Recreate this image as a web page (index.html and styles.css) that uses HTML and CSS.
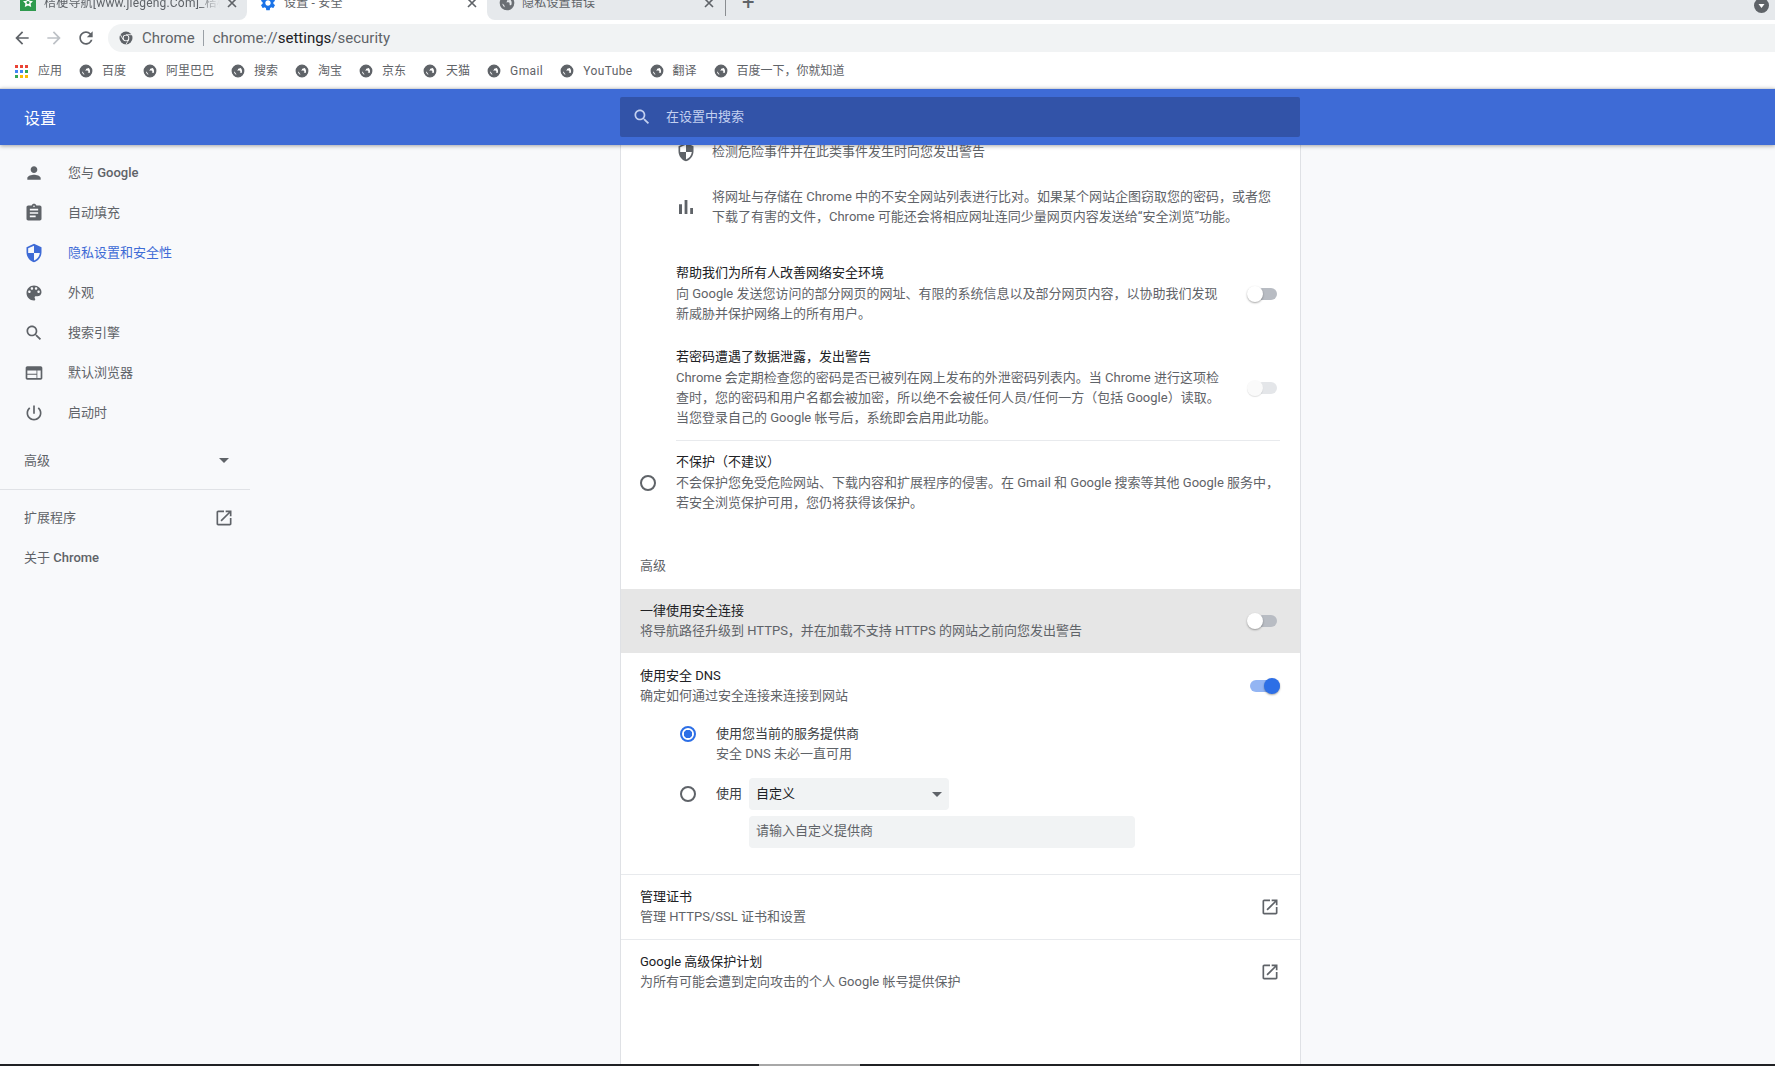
FILE: index.html
```html
<!DOCTYPE html>
<html lang="zh-CN">
<head>
    <meta charset="UTF-8">
    <title>设置 - 安全</title>
    <link rel="stylesheet" href="styles.css">
</head>
<body>
    <svg class="icon-defs">
        <symbol id="i-person" viewBox="0 0 24 24"><path d="M12 12c2.21 0 4-1.79 4-4s-1.79-4-4-4-4 1.79-4 4 1.79 4 4 4zm0 2c-2.67 0-8 1.34-8 4v2h16v-2c0-2.66-5.33-4-8-4z"/></symbol>
        <symbol id="i-assignment" viewBox="0 0 24 24"><path d="M19 3h-4.18C14.4 1.84 13.3 1 12 1c-1.3 0-2.4.84-2.82 2H5c-1.1 0-2 .9-2 2v14c0 1.1.9 2 2 2h14c1.1 0 2-.9 2-2V5c0-1.1-.9-2-2-2zm-7 0c.55 0 1 .45 1 1s-.45 1-1 1-1-.45-1-1 .45-1 1-1zm2 14H7v-2h7v2zm3-4H7v-2h10v2zm0-4H7V7h10v2z"/></symbol>
        <symbol id="i-security" viewBox="0 0 24 24"><path d="M12 1L3 5v6c0 5.55 3.84 10.74 9 12 5.16-1.26 9-6.45 9-12V5l-9-4zm0 10.99h7c-.53 4.12-3.28 7.79-7 8.94V12H5V6.3l7-3.11v8.8z"/></symbol>
        <symbol id="i-palette" viewBox="0 0 24 24"><path d="M12 3c-4.97 0-9 4.03-9 9s4.03 9 9 9c.83 0 1.5-.67 1.5-1.5 0-.39-.15-.74-.39-1.01-.23-.26-.38-.61-.38-.99 0-.83.67-1.5 1.5-1.5H16c2.76 0 5-2.24 5-5 0-4.42-4.03-8-9-8zm-5.5 9c-.83 0-1.5-.67-1.5-1.5S5.67 9 6.5 9 8 9.67 8 10.5 7.33 12 6.5 12zm3-4C8.67 8 8 7.33 8 6.5S8.67 5 9.5 5s1.5.67 1.5 1.5S10.33 8 9.5 8zm5 0c-.83 0-1.5-.67-1.5-1.5S13.67 5 14.5 5s1.5.67 1.5 1.5S15.33 8 14.5 8zm3 4c-.83 0-1.5-.67-1.5-1.5S16.67 9 17.5 9s1.5.67 1.5 1.5-.67 1.5-1.5 1.5z"/></symbol>
        <symbol id="i-search" viewBox="0 0 24 24"><path d="M15.5 14h-.79l-.28-.27C15.41 12.59 16 11.11 16 9.5 16 5.91 13.09 3 9.5 3S3 5.91 3 9.5 5.91 16 9.5 16c1.61 0 3.09-.59 4.23-1.57l.27.28v.79l5 4.99L20.49 19l-4.99-5zm-6 0C7.01 14 5 11.99 5 9.5S7.01 5 9.5 5 14 7.01 14 9.5 11.99 14 9.5 14z"/></symbol>
        <symbol id="i-web" viewBox="0 0 24 24"><path d="M20 4H4c-1.1 0-1.99.9-1.99 2L2 18c0 1.1.9 2 2 2h16c1.1 0 2-.9 2-2V6c0-1.1-.9-2-2-2zm-5 14H4v-4h11v4zm0-5H4V9h11v4zm5 5h-4V9h4v9z"/></symbol>
        <symbol id="i-power" viewBox="0 0 24 24"><path d="M13 3h-2v10h2V3zm4.83 2.17l-1.42 1.42C17.99 7.86 19 9.81 19 12c0 3.87-3.13 7-7 7s-7-3.13-7-7c0-2.19 1.01-4.14 2.58-5.42L6.17 5.17C4.23 6.82 3 9.26 3 12c0 4.97 4.03 9 9 9s9-4.03 9-9c0-2.74-1.23-5.18-3.17-6.83z"/></symbol>
        <symbol id="i-open" viewBox="0 0 24 24"><path d="M19 19H5V5h7V3H5c-1.11 0-2 .9-2 2v14c0 1.1.89 2 2 2h14c1.1 0 2-.9 2-2v-7h-2v7zM14 3v2h3.59l-9.83 9.83 1.41 1.41L19 6.41V10h2V3h-7z"/></symbol>
        <symbol id="i-bars" viewBox="0 0 24 24"><path d="M5 9.2h3V19H5zM10.6 5h2.8v14h-2.8zm5.6 8H19v6h-2.8z"/></symbol>
        <symbol id="i-globe" viewBox="0 0 24 24"><path stroke="currentColor" stroke-width="2" d="M12 2C6.48 2 2 6.48 2 12s4.48 10 10 10 10-4.48 10-10S17.52 2 12 2zm-1 17.93c-3.95-.49-7-3.85-7-7.93 0-.62.08-1.21.21-1.79L9 15v1c0 1.1.9 2 2 2v1.93zm6.9-2.54c-.26-.81-1-1.39-1.9-1.39h-1v-3c0-.55-.45-1-1-1H8v-2h2c.55 0 1-.45 1-1V7h2c1.1 0 2-.9 2-2v-.41c2.93 1.19 5 4.06 5 7.41 0 2.08-.8 3.97-2.1 5.39z"/></symbol>
        <symbol id="i-close" viewBox="0 0 12 12"><path d="M2 2l8 8M10 2l-8 8" fill="none" stroke="currentColor" stroke-width="1.6"/></symbol>
    </svg>

    <div class="tabstrip">
        <div class="tab tab-first">
            <svg class="favicon" viewBox="0 0 16 16"><rect width="16" height="16" fill="#2f9a4e"/><path d="M8 2.5l1.6 3.2 3.4.5-2.4 2.4.6 3.4L8 10.4l-3.2 1.6.6-3.4L3 6.2l3.4-.5z" fill="#fff"/><circle cx="8" cy="7.5" r="1.5" fill="#2f9a4e"/></svg>
            <span class="tab-title">桔梗导航[www.jiegeng.Com]_桔梗</span>
            <svg class="tab-close"><use href="#i-close"/></svg>
        </div>
        <div class="tab tab-active">
            <svg class="favicon gear" viewBox="0 0 24 24"><path d="M19.14 12.94c.04-.3.06-.61.06-.94 0-.32-.02-.64-.07-.94l2.03-1.58c.18-.14.23-.41.12-.61l-1.92-3.32c-.12-.22-.37-.29-.59-.22l-2.39.96c-.5-.38-1.03-.7-1.62-.94l-.36-2.54c-.04-.24-.24-.41-.48-.41h-3.84c-.24 0-.43.17-.47.41l-.36 2.54c-.59.24-1.13.57-1.62.94l-2.39-.96c-.22-.08-.47 0-.59.22L2.74 8.87c-.12.21-.08.47.12.61l2.03 1.58c-.05.3-.09.63-.09.94s.02.64.07.94l-2.03 1.58c-.18.14-.23.41-.12.61l1.92 3.32c.12.22.37.29.59.22l2.39-.96c.5.38 1.03.7 1.62.94l.36 2.54c.05.24.24.41.48.41h3.84c.24 0 .44-.17.47-.41l.36-2.54c.59-.24 1.13-.56 1.62-.94l2.39.96c.22.08.47 0 .59-.22l1.92-3.32c.12-.22.07-.47-.12-.61l-2.01-1.58zM12 15.6c-1.98 0-3.6-1.62-3.6-3.6s1.62-3.6 3.6-3.6 3.6 1.62 3.6 3.6-1.62 3.6-3.6 3.6z"/></svg>
            <span class="tab-title">设置 - 安全</span>
            <svg class="tab-close"><use href="#i-close"/></svg>
        </div>
        <div class="tab tab-last">
            <svg class="favicon globe"><use href="#i-globe"/></svg>
            <span class="tab-title">隐私设置错误</span>
            <svg class="tab-close"><use href="#i-close"/></svg>
            <span class="tab-sep"></span>
            <span class="tab-plus">+</span>
            <svg class="tab-avatar" viewBox="0 0 15 15"><circle cx="7.5" cy="7.5" r="7.5" fill="#5f6368"/><path d="M4.5 6h6l-3 4z" fill="#fff"/></svg>
        </div>
    </div>

    <div class="toolbar">
        <svg class="nav-icon" viewBox="0 0 24 24"><path d="M20 11H7.83l5.59-5.59L12 4l-8 8 8 8 1.41-1.41L7.83 13H20v-2z"/></svg>
        <svg class="nav-icon nav-off" viewBox="0 0 24 24"><path d="M12 4l-1.41 1.41L16.17 11H4v2h12.17l-5.58 5.59L12 20l8-8z"/></svg>
        <svg class="nav-icon" viewBox="0 0 24 24"><path d="M17.65 6.35C16.2 4.9 14.21 4 12 4c-4.42 0-7.99 3.58-7.99 8s3.57 8 7.99 8c3.73 0 6.84-2.55 7.73-6h-2.08c-.82 2.33-3.04 4-5.65 4-3.31 0-6-2.69-6-6s2.69-6 6-6c1.66 0 3.14.69 4.22 1.78L13 11h7V4l-2.35 2.35z"/></svg>
        <div class="omnibox">
            <svg class="chrome-icon" viewBox="0 0 14 14"><circle cx="7" cy="7" r="6.5" fill="#5f6368"/><circle cx="7" cy="7" r="3.3" fill="#fff"/><circle cx="7" cy="7" r="2.4" fill="#5f6368"/><path d="M7 3.7h6M4.2 8.7L1.3 3.6M9.8 8.7L6.9 13.5" stroke="#fff" stroke-width=".8"/></svg>
            <span class="omni-chip">Chrome</span>
            <span class="omni-sep"></span>
            <span class="omni-url">chrome://<b>settings</b>/security</span>
        </div>
    </div>

    <div class="bookmarks">
        <div class="bm">
            <svg class="apps-icon" viewBox="0 0 13 13">
                <rect width="3" height="3" x="0" y="0" fill="#ea4335"/><rect width="3" height="3" x="5" y="0" fill="#ea4335"/><rect width="3" height="3" x="10" y="0" fill="#ea4335"/>
                <rect width="3" height="3" x="0" y="5" fill="#4285f4"/><rect width="3" height="3" x="5" y="5" fill="#4285f4"/><rect width="3" height="3" x="10" y="5" fill="#34a853"/>
                <rect width="3" height="3" x="0" y="10" fill="#34a853"/><rect width="3" height="3" x="5" y="10" fill="#fbbc05"/><rect width="3" height="3" x="10" y="10" fill="#fbbc05"/>
            </svg>
            应用
        </div>
        <div class="bm"><svg class="bm-globe"><use href="#i-globe"/></svg>百度</div>
        <div class="bm"><svg class="bm-globe"><use href="#i-globe"/></svg>阿里巴巴</div>
        <div class="bm"><svg class="bm-globe"><use href="#i-globe"/></svg>搜索</div>
        <div class="bm"><svg class="bm-globe"><use href="#i-globe"/></svg>淘宝</div>
        <div class="bm"><svg class="bm-globe"><use href="#i-globe"/></svg>京东</div>
        <div class="bm"><svg class="bm-globe"><use href="#i-globe"/></svg>天猫</div>
        <div class="bm bm-latin"><svg class="bm-globe"><use href="#i-globe"/></svg>Gmail</div>
        <div class="bm bm-latin"><svg class="bm-globe"><use href="#i-globe"/></svg>YouTube</div>
        <div class="bm"><svg class="bm-globe"><use href="#i-globe"/></svg>翻译</div>
        <div class="bm"><svg class="bm-globe"><use href="#i-globe"/></svg>百度一下，你就知道</div>
    </div>

    <header class="settings-header">
        <div class="header-title">设置</div>
        <div class="searchbox">
            <svg class="search-icon"><use href="#i-search"/></svg>
            <span>在设置中搜索</span>
        </div>
    </header>

    <div class="page">
        <nav class="sidebar">
            <a class="nav-item"><svg class="nav-svg"><use href="#i-person"/></svg><span>您与 <b>Google</b></span></a>
            <a class="nav-item"><svg class="nav-svg"><use href="#i-assignment"/></svg>自动填充</a>
            <a class="nav-item active"><svg class="nav-svg"><use href="#i-security"/></svg>隐私设置和安全性</a>
            <a class="nav-item"><svg class="nav-svg"><use href="#i-palette"/></svg>外观</a>
            <a class="nav-item"><svg class="nav-svg"><use href="#i-search"/></svg>搜索引擎</a>
            <a class="nav-item"><svg class="nav-svg"><use href="#i-web"/></svg>默认浏览器</a>
            <a class="nav-item"><svg class="nav-svg"><use href="#i-power"/></svg>启动时</a>
            <div class="nav-plain nav-advanced">高级<span class="caret"></span></div>
            <div class="nav-divider"></div>
            <div class="nav-plain nav-ext">扩展程序<svg class="open-icon"><use href="#i-open"/></svg></div>
            <div class="nav-plain"><span>关于 <b>Chrome</b></span></div>
        </nav>

        <main class="card">
            <div class="bullet bullet-first">
                <svg class="bullet-icon"><use href="#i-security"/></svg>
                <div class="sub">检测危险事件并在此类事件发生时向您发出警告</div>
            </div>
            <div class="bullet bullet-second">
                <svg class="bullet-icon bars-icon"><use href="#i-bars"/></svg>
                <div class="sub">将网址与存储在 Chrome 中的不安全网站列表进行比对。如果某个网站企图窃取您的密码，或者您<br>下载了有害的文件，Chrome 可能还会将相应网址连同少量网页内容发送给“安全浏览”功能。</div>
            </div>

            <div class="nested help-row">
                <div>
                    <div class="title">帮助我们为所有人改善网络安全环境</div>
                    <div class="sub">向 Google 发送您访问的部分网页的网址、有限的系统信息以及部分网页内容，以协助我们发现<br>新威胁并保护网络上的所有用户。</div>
                </div>
                <div class="toggle"><span class="knob"></span></div>
            </div>
            <div class="nested leak-row">
                <div>
                    <div class="title">若密码遭遇了数据泄露，发出警告</div>
                    <div class="sub">Chrome 会定期检查您的密码是否已被列在网上发布的外泄密码列表内。当 Chrome 进行这项检<br>查时，您的密码和用户名都会被加密，所以绝不会被任何人员/任何一方（包括 Google）读取。<br>当您登录自己的 Google 帐号后，系统即会启用此功能。</div>
                </div>
                <div class="toggle toggle-disabled"><span class="knob"></span></div>
            </div>
            <div class="nested-divider"></div>

            <div class="noprotect">
                <span class="radio"></span>
                <div>
                    <div class="title">不保护（不建议）</div>
                    <div class="sub">不会保护您免受危险网站、下载内容和扩展程序的侵害。在 Gmail 和 Google 搜索等其他 Google 服务中，<br>若安全浏览保护可用，您仍将获得该保护。</div>
                </div>
            </div>

            <div class="section-label">高级</div>

            <div class="row row-hover">
                <div>
                    <div class="title">一律使用安全连接</div>
                    <div class="sub">将导航路径升级到 HTTPS，并在加载不支持 HTTPS 的网站之前向您发出警告</div>
                </div>
                <div class="toggle"><span class="knob"></span></div>
            </div>

            <div class="row dns-row">
                <div>
                    <div class="title">使用安全 DNS</div>
                    <div class="sub">确定如何通过安全连接来连接到网站</div>
                </div>
                <div class="toggle toggle-on"><span class="knob"></span></div>
            </div>

            <div class="dns-option">
                <span class="radio radio-on"></span>
                <div>
                    <div class="title title-soft">使用您当前的服务提供商</div>
                    <div class="sub">安全 DNS 未必一直可用</div>
                </div>
            </div>
            <div class="dns-option dns-custom">
                <span class="radio"></span>
                <span class="title-soft">使用</span>
                <div class="select">自定义<span class="caret"></span></div>
            </div>
            <div class="custom-input">请输入自定义提供商</div>

            <div class="row link-row">
                <div>
                    <div class="title">管理证书</div>
                    <div class="sub">管理 HTTPS/SSL 证书和设置</div>
                </div>
                <svg class="open-icon"><use href="#i-open"/></svg>
            </div>
            <div class="row link-row">
                <div>
                    <div class="title">Google 高级保护计划</div>
                    <div class="sub">为所有可能会遭到定向攻击的个人 Google 帐号提供保护</div>
                </div>
                <svg class="open-icon"><use href="#i-open"/></svg>
            </div>
        </main>
    </div>

    <div class="taskbar"><span class="taskbar-thumb"></span></div>
</body>
</html>
```

FILE: styles.css
```css
* {
    box-sizing: border-box;
}

body {
    margin: 0;
    height: 1066px;
    overflow: hidden;
    display: flex;
    flex-direction: column;
    background: #fff;
    font-family: Roboto, "Noto Sans CJK SC", sans-serif;
    font-size: 13px;
    line-height: 20px;
    color: #5f6368;
}

.icon-defs {
    width: 0;
    height: 0;
    position: absolute;
}

svg {
    fill: currentColor;
    flex: none;
}

/* Tab strip */
.tabstrip {
    display: flex;
    height: 20px;
    flex: none;
    overflow: hidden;
    background: #fff;
    font-size: 12px;
}

.tab {
    display: flex;
    align-items: center;
    height: 20px;
    color: #5f6368;
}

.tab > * {
    margin-top: -14px;
}

.tab-first {
    width: 247px;
    padding-left: 20px;
    background: #e6e9ec;
    border-bottom-right-radius: 8px;
}

.tab-first .tab-title {
    -webkit-mask-image: linear-gradient(to right, #000 88%, transparent);
    mask-image: linear-gradient(to right, #000 88%, transparent);
}

.tab-active {
    width: 240px;
    padding-left: 14px;
    background: #fff;
}

.tab-last {
    flex: 1;
    padding-left: 12px;
    background: #e6e9ec;
    border-bottom-left-radius: 8px;
}

.favicon {
    width: 16px;
    height: 16px;
}

.gear {
    width: 18px;
    height: 18px;
    color: #1a73e8;
    margin-left: -2px;
}

.globe {
    color: #6b6f74;
}

.tab-title {
    width: 176px;
    margin-left: 8px;
    white-space: nowrap;
    overflow: hidden;
    line-height: 16px;
    letter-spacing: .2px;
}

.tab-close {
    width: 12px;
    height: 12px;
    margin-left: 6px;
}

.tab-active .tab-title {
    width: 176px;
    margin-left: 7px;
}

.tab-last .tab-title {
    width: 175px;
    margin-left: 7px;
}

.tab-sep {
    width: 1px;
    height: 26px;
    margin-left: 10px;
    background: #8a8d91;
}

.tab-plus {
    margin-left: 16px;
    font-size: 22px;
    line-height: 16px;
    color: #5f6368;
}

.tab-avatar {
    width: 15px;
    height: 15px;
    margin-left: auto;
    margin-right: 6px;
    margin-top: -10px;
}

/* Toolbar */
.toolbar {
    display: flex;
    align-items: center;
    height: 36px;
    flex: none;
    padding: 4px 0 4px 12px;
}

.nav-icon {
    width: 20px;
    height: 20px;
    margin-right: 12px;
    color: #5f6368;
}

.nav-off {
    color: #bdc1c6;
}

.omnibox {
    flex: 1;
    height: 28px;
    display: flex;
    align-items: center;
    padding-left: 11px;
    border-radius: 14px 0 0 14px;
    background: #f1f3f4;
    font-size: 15px;
    color: #5f6368;
}

.omni-url b {
    font-weight: 400;
    color: #202124;
}

.chrome-icon {
    width: 14px;
    height: 14px;
    margin-right: 9px;
}

.omni-sep {
    width: 1px;
    height: 16px;
    margin: 0 9px 0 8px;
    background: #9aa0a6;
}

/* Bookmarks bar */
.bookmarks {
    display: flex;
    align-items: center;
    gap: 17px;
    height: 32px;
    flex: none;
    padding: 0 0 2px 15px;
    font-size: 12px;
    color: #5f6368;
}

.bm {
    display: flex;
    align-items: center;
    white-space: nowrap;
}

.bm-latin {
    letter-spacing: .4px;
}

.apps-icon {
    width: 13px;
    height: 13px;
    margin-right: 10px;
}

.bm-globe {
    width: 14px;
    height: 14px;
    margin-right: 9px;
    color: #5f6368;
}

/* Settings header */
.settings-header {
    display: flex;
    align-items: center;
    height: 57px;
    flex: none;
    border-top: 1px solid #d6d8da;
    background: #3e6bd6;
    box-shadow: 0 1px 4px rgba(0, 0, 0, 0.35);
    position: relative;
    z-index: 2;
}

.header-title {
    width: 620px;
    padding: 3px 0 0 24px;
    font-size: 16px;
    color: #fff;
}

.searchbox {
    display: flex;
    align-items: center;
    gap: 14px;
    width: 680px;
    height: 40px;
    padding-left: 12px;
    border-radius: 2px;
    background: #3253a8;
    color: #c3d0f0;
}

.search-icon {
    width: 20px;
    height: 20px;
}

/* Layout under the header */
.page {
    flex: 1;
    display: flex;
    min-height: 0;
    background: #f8f9fb;
}

.sidebar {
    width: 620px;
    flex: none;
    padding-top: 8px;
}

.sidebar b {
    font-weight: 500;
}

.nav-item {
    display: flex;
    align-items: center;
    gap: 24px;
    height: 40px;
    width: 250px;
    padding-left: 24px;
}

.nav-item.active {
    color: #3e6bd6;
}

.nav-svg {
    width: 20px;
    height: 20px;
}

.nav-plain {
    display: flex;
    align-items: center;
    justify-content: space-between;
    width: 250px;
    height: 40px;
    padding: 1px 16px 0 24px;
}

.nav-advanced {
    margin-top: 7px;
}

.nav-divider {
    width: 250px;
    height: 1px;
    margin-top: 9px;
    background: #e0e2e6;
}

.nav-ext {
    margin-top: 7px;
}

.caret {
    width: 0;
    height: 0;
    margin-right: 5px;
    border-left: 5px solid transparent;
    border-right: 5px solid transparent;
    border-top: 5px solid #5f6368;
}

.open-icon {
    width: 20px;
    height: 20px;
    color: #5f6368;
}

/* Main card */
.card {
    width: 681px;
    flex: none;
    overflow: hidden;
    border-left: 1px solid #dfe1e5;
    border-right: 1px solid #dfe1e5;
    background: #fff;
}

.title {
    padding-top: 1px;
    color: #202124;
    white-space: nowrap;
}

.nested .title,
.noprotect .title {
    padding-top: 0;
    margin-bottom: 1px;
}

.title-soft {
    color: #3c4043;
    white-space: nowrap;
}

.sub {
    color: #5f6368;
    white-space: nowrap;
}

.bullet {
    display: flex;
    align-items: center;
    gap: 16px;
    padding-left: 55px;
}

.bullet-first {
    margin-top: -3px;
}

.bullet-second {
    margin-top: 25px;
}

.bullet-icon {
    width: 20px;
    height: 20px;
}

.bars-icon {
    width: 24px;
    height: 24px;
    margin: 0 -2px;
}

.nested {
    display: flex;
    align-items: center;
    justify-content: space-between;
    padding: 0 23px 0 55px;
}

.help-row {
    margin-top: 36px;
}

.leak-row {
    margin-top: 23px;
}

.nested-divider {
    height: 1px;
    margin: 12px 20px 0 55px;
    background: #e8eaed;
}

.noprotect {
    display: flex;
    align-items: center;
    gap: 20px;
    padding: 11px 0 0 19px;
}

.section-label {
    margin-top: 43px;
    padding-left: 19px;
}

.row {
    display: flex;
    align-items: center;
    justify-content: space-between;
    padding: 11px 23px 12px 19px;
}

.row-hover {
    margin: 13px 0 0 -1px;
    padding-left: 20px;
    background: #e6e6e6;
}

.dns-row {
    padding: 12px 20px 0 19px;
}

.dns-option {
    display: flex;
    align-items: flex-start;
    gap: 20px;
    margin-top: 17px;
    padding-left: 59px;
}

.dns-option .radio {
    margin-top: 3px;
}

.dns-custom {
    align-items: center;
    gap: 20px;
    margin-top: 14px;
}

.dns-custom .radio {
    margin-top: 0;
}

.select {
    display: flex;
    align-items: center;
    justify-content: space-between;
    width: 200px;
    height: 32px;
    margin-left: -13px;
    padding: 0 2px 0 7px;
    border-radius: 4px;
    background: #f1f3f4;
    color: #202124;
}

.custom-input {
    width: 386px;
    height: 32px;
    margin: 6px 0 26px 128px;
    padding: 5px 7px;
    border-radius: 4px;
    background: #f1f3f4;
    color: #5f6368;
}

.link-row {
    border-top: 1px solid #e8eaed;
    padding-right: 20px;
}

/* Radios and toggles */
.radio {
    width: 16px;
    height: 16px;
    flex: none;
    border: 2px solid #5f6368;
    border-radius: 50%;
}

.radio-on {
    border-color: #2d6fe6;
    background: radial-gradient(circle, #2d6fe6 0 4px, #fff 4.5px);
}

.toggle {
    display: flex;
    align-items: center;
    width: 27px;
    height: 12px;
    flex: none;
    border-radius: 6px;
    background: #b8bcc3;
}

.knob {
    width: 16px;
    height: 16px;
    margin-left: -3px;
    border-radius: 50%;
    background: #fff;
    box-shadow: 0 1px 2px rgba(0, 0, 0, 0.35);
}

.toggle-disabled {
    background: #e4e6e9;
}

.toggle-disabled .knob {
    background: #fafafa;
    box-shadow: 0 1px 1px rgba(0, 0, 0, 0.12);
}

.toggle-on {
    justify-content: flex-end;
    width: 30px;
    background: #93b5f3;
}

.toggle-on .knob {
    margin: 0;
    background: #2d6fe6;
}

/* Bottom edge of the screen */
.taskbar {
    height: 2px;
    flex: none;
    padding-left: 759px;
    background: #202124;
}

.taskbar-thumb {
    display: block;
    width: 101px;
    height: 2px;
    background: #a8a8a8;
}
```
